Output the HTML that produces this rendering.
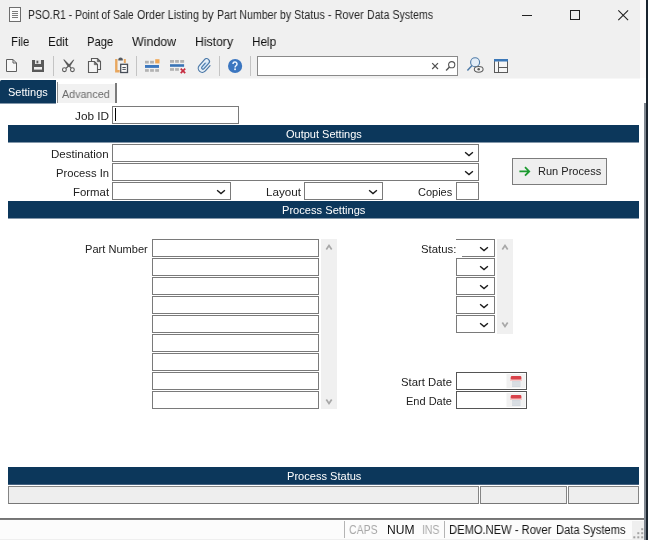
<!DOCTYPE html>
<html>
<head>
<meta charset="utf-8">
<title>PSO.R1 - Point of Sale Order Listing by Part Number by Status - Rover Data Systems</title>
<style>
*{box-sizing:border-box;margin:0;padding:0}
html,body{width:648px;height:540px;overflow:hidden;background:#fff}
body{font-family:"Liberation Sans",sans-serif;font-size:11px;color:#222;position:relative}
.abs{position:absolute}
.t{position:absolute;white-space:nowrap;transform-origin:0 0;will-change:transform}
.hdr{position:absolute;left:8px;width:631px;height:18px;background:#0c375b;border-bottom:1px solid #8397aa}
.inp{position:absolute;background:#fff;border:1px solid #7a7a7a}
.sep{position:absolute;top:56px;width:1px;height:20px;background:#c4c4c4}
.pb{position:absolute;top:486px;height:18px;background:#eeeeee;border:1px solid #858585;border-bottom-color:#777}
</style>
</head>
<body>
<!-- chrome backgrounds -->
<div class="abs" style="left:0;top:0;width:640px;height:78px;background:#f0f0f0"></div>
<div class="abs" style="left:640px;top:0;width:6px;height:78px;background:#fdfbfb"></div>
<div class="abs" style="left:0;top:78px;width:640px;height:1px;background:#f7f7f7"></div>

<!-- title icon -->
<svg class="abs" style="left:8px;top:6px" width="14" height="17" viewBox="0 0 14 17">
<rect x="1.5" y="1.5" width="11" height="14" fill="#fafafa" stroke="#6e6e6e" stroke-width="1"/>
<path d="M4 5.5h6M4 7.5h6M4 9.5h6M4 11.5h6" stroke="#7a7a7a" stroke-width="1"/>
</svg>
<!-- window controls -->
<svg class="abs" style="left:516px;top:5px" width="120" height="20" viewBox="0 0 120 20">
<path d="M6 10.5h10" stroke="#222" stroke-width="1"/>
<rect x="54.5" y="5.5" width="9" height="9" fill="none" stroke="#222" stroke-width="1"/>
<path d="M102.300 5.300l9.800 9.800M112.100 5.300l-9.800 9.800" stroke="#222" stroke-width="1.1"/>
</svg>

<!-- toolbar icons -->
<svg class="abs" style="left:0;top:54px" width="520" height="24" viewBox="0 0 520 24">
<!-- new -->
<path d="M6.500 5.500h6.500l3.500 3.500v8.500h-10z" fill="#f7f7f7" stroke="#5e5e5e" stroke-width="1"/>
<path d="M13 5.500v3.500h3.500" fill="none" stroke="#5e5e5e" stroke-width="1"/>
<!-- save -->
<path d="M32 6h12v12h-12z" fill="#595959"/>
<rect x="35" y="6" width="6" height="4" fill="#e4e4e4"/>
<rect x="36.500" y="6.700" width="1.800" height="2.600" fill="#595959"/>
<rect x="34" y="13" width="8" height="2.600" fill="#efefef"/>
<!-- cut -->
<path d="M63.200 5.400L64.400 5.400L70.400 11.400L68.100 13.100Z" fill="#5a5a5a"/>
<path d="M74.300 5.700L73.200 5.700L68.700 10.700L70.100 12.500Z" fill="#5a5a5a"/>
<path d="M69.200 12L71.200 14.200M68.600 12L66 14.200" stroke="#5a5a5a" stroke-width="1.200" fill="none"/>
<circle cx="64.400" cy="15.700" r="1.900" fill="#f6f6f6" stroke="#5a5a5a" stroke-width="1.100"/>
<circle cx="72.400" cy="15.700" r="1.900" fill="#f6f6f6" stroke="#5a5a5a" stroke-width="1.100"/>
<!-- copy -->
<path d="M91.500 4.500h6l3 3v8h-9z" fill="#f4f4f4" stroke="#5a5a5a" stroke-width="1.100"/>
<path d="M97.300 4.500v3.200h3.200z" fill="#6a6a6a" stroke="#5a5a5a" stroke-width="0.600"/>
<path d="M88.500 7.500h6l3 3v8h-9z" fill="#f4f4f4" stroke="#5a5a5a" stroke-width="1.100"/>
<path d="M94.300 7.500v3.200h3.200z" fill="#6a6a6a" stroke="#5a5a5a" stroke-width="0.600"/>
<!-- paste -->
<path d="M116.300 5v12.300h3.400" fill="none" stroke="#e8a75f" stroke-width="2.400"/>
<path d="M124.800 5v4" fill="none" stroke="#e8a75f" stroke-width="2"/>
<path d="M118.300 6.500v-1a2.250 2 0 0 1 4.500 0v1z" fill="#565a60"/>
<rect x="120.700" y="10.300" width="6.800" height="8.200" fill="#fafafa" stroke="#474d57" stroke-width="1.300"/>
<path d="M122.400 13.500h3.400M122.400 15.400h3.400" stroke="#474d57" stroke-width="1"/>
<!-- insert row -->
<rect x="145" y="6.800" width="3.800" height="2.700" fill="#b2b2b2"/><rect x="150.100" y="6.800" width="3.800" height="2.700" fill="#b2b2b2"/><rect x="155.200" y="5.200" width="4.300" height="4.200" fill="#f0a857"/>
<rect x="145" y="11" width="14" height="2.900" fill="#3c78bf"/>
<rect x="145" y="15.100" width="3.800" height="2.700" fill="#b2b2b2"/><rect x="150.100" y="15.100" width="3.800" height="2.700" fill="#b2b2b2"/><rect x="155.200" y="15.100" width="3.800" height="2.700" fill="#b2b2b2"/>
<!-- delete row -->
<rect x="170" y="6" width="4" height="2.800" fill="#b2b2b2"/><rect x="175.100" y="6" width="3.800" height="2.800" fill="#b2b2b2"/><rect x="180.200" y="6" width="3.900" height="2.800" fill="#b2b2b2"/>
<rect x="170" y="10.200" width="14.100" height="2.600" fill="#3a74b6"/>
<rect x="170" y="14.100" width="4" height="2.700" fill="#b2b2b2"/><rect x="175.100" y="14.100" width="3.800" height="2.700" fill="#b2b2b2"/>
<path d="M180.700 14.700l4.500 4.500M185.200 14.700l-4.500 4.500" stroke="#c62c40" stroke-width="1.700"/>
<!-- paperclip -->
<g transform="translate(204.500,11.700) rotate(-49)">
<path d="M-3.400 0L4.600 -1.200" stroke="#e4eef7" stroke-width="6.500" stroke-linecap="round" fill="none"/>
<rect x="-3.500" y="-1.100" width="8" height="2.700" fill="#cde4f8"/>
<path d="M3.700 4.100L-3.400 4.100A4.050 4.050 0 0 1 -3.400 -4L4.600 -4A2.800 2.800 0 0 1 4.600 1.600L-2.600 1.600A1.350 1.350 0 0 1 -2.600 -1.100L2.400 -1.100" fill="none" stroke="#4a78a8" stroke-width="1.200" stroke-linecap="round"/>
</g>
<!-- help -->
<circle cx="235.100" cy="12" r="7.100" fill="#3b76c0"/>
<path d="M233 9.900a2 2 0 1 1 3.200 1.600c-.800.600-1.150 1-1.150 2" fill="none" stroke="#eef6ff" stroke-width="1.500"/>
<circle cx="235.050" cy="15.200" r="0.950" fill="#eef6ff"/>
<!-- search box -->
<rect x="257.500" y="2.500" width="200" height="19" fill="#fff" stroke="#8a8a8a" stroke-width="1"/>
<path d="M432.200 9.200l5.800 5.800M438 9.200l-5.800 5.800" stroke="#505050" stroke-width="1.200"/>
<circle cx="451.700" cy="10.700" r="3.100" fill="none" stroke="#555" stroke-width="1.100"/>
<path d="M449.500 13l-3.400 3.600" stroke="#555" stroke-width="1.400"/>
<!-- search eye -->
<circle cx="475.100" cy="8.200" r="4.500" fill="#e3edf7" stroke="#4f7ba8" stroke-width="1.100"/>
<path d="M472 11.500l-4.600 5" stroke="#4f7ba8" stroke-width="1.500"/>
<ellipse cx="478.700" cy="15.300" rx="4.400" ry="2.900" fill="#f4f4f4" stroke="#5c5c5c" stroke-width="1.050"/>
<circle cx="478.700" cy="15.300" r="1.250" fill="#5c5c5c"/>
<!-- layout -->
<rect x="494.500" y="5.500" width="13" height="13" fill="#f6f6f6" stroke="#5a5a5a" stroke-width="1"/>
<rect x="494" y="5" width="14" height="2.500" fill="#3c78b8"/>
<path d="M498.500 7.500v11M498.500 13.500h9" stroke="#5a5a5a" stroke-width="1"/>
</svg>
<div class="sep" style="left:53px"></div>
<div class="sep" style="left:136px"></div>
<div class="sep" style="left:219px"></div>
<div class="sep" style="left:250px"></div>

<!-- tabs -->
<div class="abs" style="left:0;top:80px;width:56px;height:24px;background:#0c375b;border-bottom:1px solid #8397aa;border-top-left-radius:1.5px"></div>
<div class="abs" style="left:57px;top:82px;width:1px;height:21px;background:#8c8c8c"></div>
<div class="abs" style="left:58px;top:84px;width:58px;height:19px;background:#f1f1f1"></div>
<div class="abs" style="left:115px;top:83px;width:2px;height:20px;background:#7b7b7b"></div>

<!-- Job ID -->
<div class="inp" style="left:112px;top:106px;width:127px;height:18px"></div>
<div class="abs" style="left:115px;top:108px;width:1px;height:13px;background:#000"></div>

<div class="hdr" style="top:125px"></div>

<div class="inp" style="left:112px;top:144px;width:367px;height:18px"></div>
<div class="inp" style="left:112px;top:163px;width:367px;height:18px"></div>
<div class="inp" style="left:112px;top:182px;width:119px;height:18px"></div>
<div class="inp" style="left:304px;top:182px;width:79px;height:18px"></div>
<div class="inp" style="left:456px;top:182px;width:23px;height:18px"></div>
<svg class="abs" style="left:463.5px;top:150.0px" width="10" height="7" viewBox="0 0 10 7"><path d="M1.100 2.300L5 5.600L8.900 2.300" fill="none" stroke="#1a1a1a" stroke-width="1.4"/></svg>
<svg class="abs" style="left:463.5px;top:169.0px" width="10" height="7" viewBox="0 0 10 7"><path d="M1.100 2.300L5 5.600L8.900 2.300" fill="none" stroke="#1a1a1a" stroke-width="1.4"/></svg>
<svg class="abs" style="left:215.5px;top:187.6px" width="10" height="7" viewBox="0 0 10 7"><path d="M1.100 2.300L5 5.600L8.900 2.300" fill="none" stroke="#1a1a1a" stroke-width="1.4"/></svg>
<svg class="abs" style="left:367.5px;top:187.6px" width="10" height="7" viewBox="0 0 10 7"><path d="M1.100 2.300L5 5.600L8.900 2.300" fill="none" stroke="#1a1a1a" stroke-width="1.4"/></svg>

<!-- Run Process -->
<div class="abs" style="left:512px;top:158px;width:95px;height:27px;background:#efefef;border:1px solid #7c7c7c"></div>
<svg class="abs" style="left:517px;top:164px" width="16" height="14" viewBox="0 0 16 14"><path d="M2.400 7.400h9.400M8 3.200l4.200 4.200l-4.200 4.200" stroke="#1d9a30" stroke-width="1.800" fill="none"/></svg>

<div class="hdr" style="top:201px"></div>

<!-- Part Number -->
<div class="inp" style="left:152px;top:239px;width:167px;height:18px"></div>
<div class="inp" style="left:152px;top:258px;width:167px;height:18px"></div>
<div class="inp" style="left:152px;top:277px;width:167px;height:18px"></div>
<div class="inp" style="left:152px;top:296px;width:167px;height:18px"></div>
<div class="inp" style="left:152px;top:315px;width:167px;height:18px"></div>
<div class="inp" style="left:152px;top:334px;width:167px;height:18px"></div>
<div class="inp" style="left:152px;top:353px;width:167px;height:18px"></div>
<div class="inp" style="left:152px;top:372px;width:167px;height:18px"></div>
<div class="inp" style="left:152px;top:391px;width:167px;height:18px"></div>
<div class="abs" style="left:321px;top:239px;width:16px;height:170px;background:#f0f0f0"></div>
<svg class="abs" style="left:323.6px;top:243.0px" width="10" height="7" viewBox="0 0 10 7"><path d="M2.300 6.500L5 2.500L7.700 6.500" fill="none" stroke="#a8a8a8" stroke-width="1.7"/></svg>
<svg class="abs" style="left:323.6px;top:399.2px" width="10" height="7" viewBox="0 0 10 7"><path d="M2.300 0.500L5 4.500L7.700 0.500" fill="none" stroke="#a8a8a8" stroke-width="1.7"/></svg>

<!-- Status -->
<div class="inp" style="left:456px;top:239px;width:39px;height:18px"></div><svg class="abs" style="left:479.2px;top:244.6px" width="10" height="7" viewBox="0 0 10 7"><path d="M1.100 2.300L5 5.600L8.900 2.300" fill="none" stroke="#1a1a1a" stroke-width="1.4"/></svg>
<div class="inp" style="left:456px;top:258px;width:39px;height:18px"></div><svg class="abs" style="left:479.2px;top:263.6px" width="10" height="7" viewBox="0 0 10 7"><path d="M1.100 2.300L5 5.600L8.900 2.300" fill="none" stroke="#1a1a1a" stroke-width="1.4"/></svg>
<div class="inp" style="left:456px;top:277px;width:39px;height:18px"></div><svg class="abs" style="left:479.2px;top:282.6px" width="10" height="7" viewBox="0 0 10 7"><path d="M1.100 2.300L5 5.600L8.900 2.300" fill="none" stroke="#1a1a1a" stroke-width="1.4"/></svg>
<div class="inp" style="left:456px;top:296px;width:39px;height:18px"></div><svg class="abs" style="left:479.2px;top:301.6px" width="10" height="7" viewBox="0 0 10 7"><path d="M1.100 2.300L5 5.600L8.900 2.300" fill="none" stroke="#1a1a1a" stroke-width="1.4"/></svg>
<div class="inp" style="left:456px;top:315px;width:39px;height:18px"></div><svg class="abs" style="left:479.2px;top:320.6px" width="10" height="7" viewBox="0 0 10 7"><path d="M1.100 2.300L5 5.600L8.900 2.300" fill="none" stroke="#1a1a1a" stroke-width="1.4"/></svg>
<div class="abs" style="left:420px;top:240px;width:42px;height:18px;background:#fff"></div>
<div class="abs" style="left:497px;top:239px;width:16px;height:95px;background:#f0f0f0"></div>
<svg class="abs" style="left:499.6px;top:243.0px" width="10" height="7" viewBox="0 0 10 7"><path d="M2.300 6.500L5 2.500L7.700 6.500" fill="none" stroke="#a8a8a8" stroke-width="1.7"/></svg>
<svg class="abs" style="left:499.6px;top:322.2px" width="10" height="7" viewBox="0 0 10 7"><path d="M2.300 0.500L5 4.500L7.700 0.500" fill="none" stroke="#a8a8a8" stroke-width="1.7"/></svg>

<!-- Dates -->
<div class="inp" style="left:456px;top:372px;width:71px;height:18px;border-color:#555"></div>
<div class="inp" style="left:456px;top:391px;width:71px;height:18px;border-color:#555"></div>
<svg class="abs" style="left:506px;top:373px" width="20" height="36" viewBox="0 0 20 36">
<g>
<rect x="0.500" y="1" width="19" height="14" fill="#f1f1f1"/>
<rect x="4" y="4.500" width="12" height="3.500" fill="#f6c9c9"/>
<rect x="4.800" y="3" width="10.500" height="3.400" rx="1" fill="#d8424a"/>
<rect x="6" y="8" width="8.500" height="6" fill="#d3d9df"/>
<path d="M6 10h8.500M6 12h8.500" stroke="#e4e7ea" stroke-width="0.700"/>
</g>
<g transform="translate(0,19)">
<rect x="0.500" y="1" width="19" height="14" fill="#f1f1f1"/>
<rect x="4" y="4.500" width="12" height="3.500" fill="#f6c9c9"/>
<rect x="4.800" y="3" width="10.500" height="3.400" rx="1" fill="#d8424a"/>
<rect x="6" y="8" width="8.500" height="6" fill="#d3d9df"/>
<path d="M6 10h8.500M6 12h8.500" stroke="#e4e7ea" stroke-width="0.700"/>
</g>
</svg>

<div class="hdr" style="top:467px;border-bottom-color:#456280"></div>
<div class="pb" style="left:8px;width:471px"></div>
<div class="pb" style="left:480px;width:87px"></div>
<div class="pb" style="left:568px;width:71px"></div>

<!-- status bar -->
<div class="abs" style="left:0;top:520px;width:645px;height:20px;background:#fcfcfc"></div>
<div class="abs" style="left:0;top:518px;width:645px;height:2px;background:#7a7a7a;border-top:1px solid #747474"></div>
<div class="abs" style="left:0;top:539px;width:632px;height:1px;background:#efefef"></div>
<div class="abs" style="left:344px;top:521px;width:1px;height:17px;background:#b4b4b4"></div>
<div class="abs" style="left:444px;top:521px;width:1px;height:17px;background:#b4b4b4"></div>
<div class="abs" style="left:632px;top:521px;width:13px;height:19px;background:#efefef"></div>
<svg class="abs" style="left:632px;top:526px" width="13" height="14" viewBox="0 0 13 14">
<g fill="#a3a3a3"><rect x="9.200" y="2.200" width="2" height="2"/><rect x="5.300" y="6.200" width="2" height="2"/><rect x="9.200" y="6.200" width="2" height="2"/><rect x="1.300" y="10.300" width="2" height="2"/><rect x="5.300" y="10.300" width="2" height="2"/><rect x="9.200" y="10.300" width="2" height="2"/></g>
</svg>

<div class="t" style="left:27.57px;top:8.00px;font-size:12px;line-height:14px;color:#262626;transform:scaleX(0.8612)">PSO.R1 - Point of Sale</div>
<div class="t" style="left:136.85px;top:8.00px;font-size:12px;line-height:14px;color:#262626;transform:scaleX(0.9020)">Order Listing by</div>
<div class="t" style="left:216.86px;top:8.00px;font-size:12px;line-height:14px;color:#262626;transform:scaleX(0.8830)">Part Number by</div>
<div class="t" style="left:293.95px;top:8.00px;font-size:12px;line-height:14px;color:#262626;transform:scaleX(0.9087)">Status - Rover</div>
<div class="t" style="left:367.26px;top:8.00px;font-size:12px;line-height:14px;color:#262626;transform:scaleX(0.8848)">Data Systems</div>
<div class="t" style="left:10.96px;top:34.00px;font-size:13px;line-height:15px;color:#111;transform:scaleX(0.8734)">File</div>
<div class="t" style="left:47.95px;top:34.00px;font-size:13px;line-height:15px;color:#111;transform:scaleX(0.8971)">Edit</div>
<div class="t" style="left:87.27px;top:34.00px;font-size:13px;line-height:15px;color:#111;transform:scaleX(0.8560)">Page</div>
<div class="t" style="left:132.02px;top:34.00px;font-size:13px;line-height:15px;color:#111;transform:scaleX(0.9557)">Window</div>
<div class="t" style="left:195.13px;top:34.00px;font-size:13px;line-height:15px;color:#111;transform:scaleX(0.9394)">History</div>
<div class="t" style="left:252.35px;top:34.00px;font-size:13px;line-height:15px;color:#111;transform:scaleX(0.9047)">Help</div>
<div class="t" style="left:7.90px;top:86.00px;font-size:11px;line-height:12px;color:#fff;transform:scaleX(0.9987)">Settings</div>
<div class="t" style="left:61.71px;top:87.50px;font-size:11px;line-height:12px;color:#6a6a6a;transform:scaleX(0.9747)">Advanced</div>
<div class="t" style="left:75.26px;top:110.00px;font-size:11px;line-height:12px;color:#222;transform:scaleX(1.0724)">Job ID</div>
<div class="t" style="left:285.60px;top:128.00px;font-size:11px;line-height:12px;color:#fff;transform:scaleX(0.9996)">Output Settings</div>
<div class="t" style="left:50.98px;top:148.00px;font-size:11px;line-height:12px;color:#222;transform:scaleX(1.0482)">Destination</div>
<div class="t" style="left:55.59px;top:167.00px;font-size:11px;line-height:12px;color:#222;transform:scaleX(1.0218)">Process In</div>
<div class="t" style="left:72.58px;top:186.00px;font-size:11px;line-height:12px;color:#222;transform:scaleX(1.0361)">Format</div>
<div class="t" style="left:265.67px;top:186.00px;font-size:11px;line-height:12px;color:#222;transform:scaleX(1.0626)">Layout</div>
<div class="t" style="left:418.30px;top:186.00px;font-size:11px;line-height:12px;color:#222;transform:scaleX(0.9956)">Copies</div>
<div class="t" style="left:538.40px;top:165.40px;font-size:11px;line-height:12px;color:#222;transform:scaleX(1.0034)">Run Process</div>
<div class="t" style="left:281.99px;top:204.00px;font-size:11px;line-height:12px;color:#fff;transform:scaleX(1.0103)">Process Settings</div>
<div class="t" style="left:85.10px;top:243.00px;font-size:11px;line-height:12px;color:#222;transform:scaleX(1.0071)">Part Number</div>
<div class="t" style="left:421.08px;top:243.00px;font-size:11px;line-height:12px;color:#222;transform:scaleX(1.0336)">Status:</div>
<div class="t" style="left:401.09px;top:376.00px;font-size:11px;line-height:12px;color:#222;transform:scaleX(1.0297)">Start Date</div>
<div class="t" style="left:406.20px;top:395.00px;font-size:11px;line-height:12px;color:#222;transform:scaleX(1.0005)">End Date</div>
<div class="t" style="left:287.00px;top:470.00px;font-size:11px;line-height:12px;color:#fff;transform:scaleX(1.0056)">Process Status</div>
<div class="t" style="left:349.36px;top:523.00px;font-size:12px;line-height:14px;color:#a8a8a8;transform:scaleX(0.8719)">CAPS</div>
<div class="t" style="left:387.00px;top:523.00px;font-size:12px;line-height:14px;color:#111;transform:scaleX(1.0063)">NUM</div>
<div class="t" style="left:422.17px;top:523.00px;font-size:12px;line-height:14px;color:#a8a8a8;transform:scaleX(0.8693)">INS</div>
<div class="t" style="left:449.43px;top:523.00px;font-size:12px;line-height:14px;color:#161616;transform:scaleX(0.9308)">DEMO.NEW - Rover</div>
<div class="t" style="left:556.23px;top:523.00px;font-size:12px;line-height:14px;color:#161616;transform:scaleX(0.9303)">Data Systems</div>

<!-- right window edge -->
<div class="abs" style="left:644px;top:103px;width:2px;height:437px;background:#7f8790"></div>
<div class="abs" style="left:646px;top:0;width:2px;height:540px;background:#1a242e"></div>
</body>
</html>
